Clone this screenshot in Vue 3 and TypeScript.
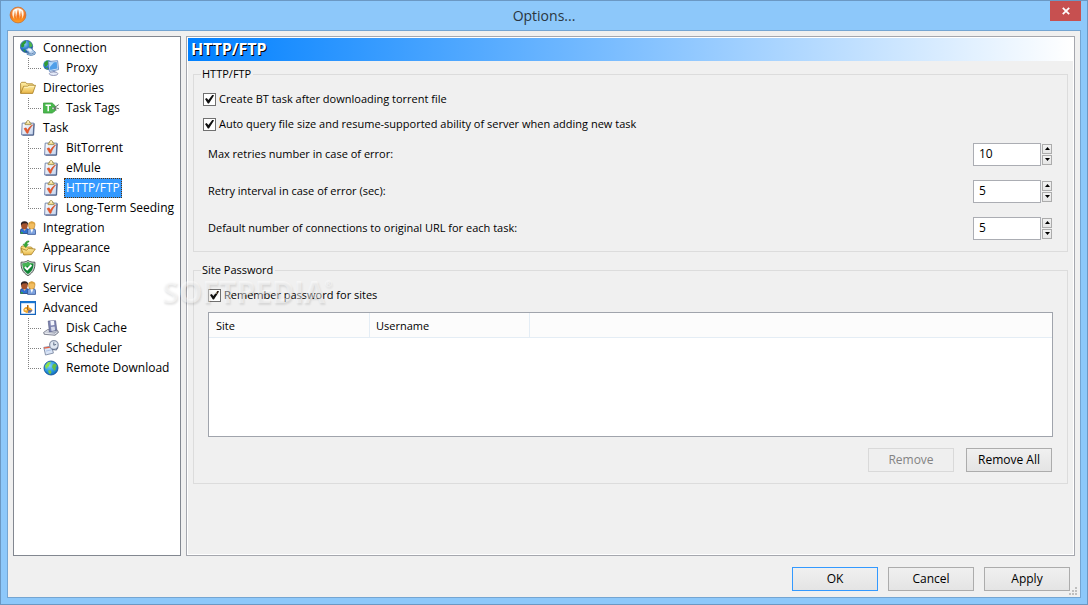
<script setup lang="ts">
import { ref, reactive } from 'vue'

interface TreeItem {
  label: string
  icon: string
  children?: TreeItem[]
}

interface NumberSetting {
  id: string
  label: string
  value: number
}

const tree: TreeItem[] = [
  { label: 'Connection', icon: 'connection', children: [{ label: 'Proxy', icon: 'proxy' }] },
  { label: 'Directories', icon: 'folder', children: [{ label: 'Task Tags', icon: 'tag' }] },
  {
    label: 'Task',
    icon: 'task',
    children: [
      { label: 'BitTorrent', icon: 'task' },
      { label: 'eMule', icon: 'task' },
      { label: 'HTTP/FTP', icon: 'task' },
      { label: 'Long-Term Seeding', icon: 'task' },
    ],
  },
  { label: 'Integration', icon: 'users' },
  { label: 'Appearance', icon: 'appearance' },
  { label: 'Virus Scan', icon: 'shield' },
  { label: 'Service', icon: 'users' },
  {
    label: 'Advanced',
    icon: 'advanced',
    children: [
      { label: 'Disk Cache', icon: 'disk' },
      { label: 'Scheduler', icon: 'scheduler' },
      { label: 'Remote Download', icon: 'globe' },
    ],
  },
]

const selected = ref('HTTP/FTP')
const createTask = ref(true)
const autoQuery = ref(true)
const rememberPassword = ref(true)

const settings = reactive<NumberSetting[]>([
  { id: 'max-retries', label: 'Max retries number in case of error:', value: 10 },
  { id: 'retry-interval', label: 'Retry interval in case of error (sec):', value: 5 },
  { id: 'connections', label: 'Default number of connections to original URL for each task:', value: 5 },
])

function step(setting: NumberSetting, delta: number): void {
  setting.value = Math.max(0, setting.value + delta)
}
</script>

<template>
  <div class="window">
    <svg class="sprite" aria-hidden="true">
      <defs>
        <radialGradient id="g-globe" cx="0.35" cy="0.3" r="0.8">
          <stop offset="0" stop-color="#8fd0f5" />
          <stop offset="0.5" stop-color="#2a78cc" />
          <stop offset="1" stop-color="#0d3f8f" />
        </radialGradient>
        <radialGradient id="g-sky" cx="0.4" cy="0.35" r="0.75">
          <stop offset="0" stop-color="#7fd2fb" />
          <stop offset="0.6" stop-color="#2392dd" />
          <stop offset="1" stop-color="#0f5fae" />
        </radialGradient>
        <linearGradient id="g-folder" x1="0" y1="0" x2="0" y2="1">
          <stop offset="0" stop-color="#fff0a8" />
          <stop offset="1" stop-color="#e8b444" />
        </linearGradient>
        <linearGradient id="g-paper" x1="0" y1="0" x2="1" y2="1">
          <stop offset="0" stop-color="#ffffff" />
          <stop offset="1" stop-color="#c3d2ec" />
        </linearGradient>
        <linearGradient id="g-metal" x1="0" y1="0" x2="1" y2="1">
          <stop offset="0" stop-color="#f4f6fb" />
          <stop offset="1" stop-color="#7f879c" />
        </linearGradient>
        <linearGradient id="g-logo" x1="0" y1="0" x2="0" y2="1">
          <stop offset="0" stop-color="#f7a05a" />
          <stop offset="0.55" stop-color="#f4701c" />
          <stop offset="1" stop-color="#ffa424" />
        </linearGradient>
        <linearGradient id="g-flame" x1="0" y1="0" x2="0" y2="1">
          <stop offset="0" stop-color="#fff" />
          <stop offset="0.6" stop-color="#fff0d8" />
          <stop offset="1" stop-color="#ffb84a" />
        </linearGradient>
        <symbol id="i-connection" viewBox="0 0 16 16">
          <circle cx="6.5" cy="6.5" r="6.2" fill="url(#g-globe)" stroke="#2b5a8c" stroke-width="0.6" />
          <path d="M1.5 3.5 4 1.2 6 .8 5.8 3 4.2 4.4 4.2 6.2 2.6 7.4 1 6.6z" fill="#2c9a35" />
          <path d="M8.5 1.4 11 2.4 12.4 5.4 11 7.6 9 6.6 9.4 4.4z" fill="#4fb848" />
          <path d="M3 9.4 5 9.4 5.6 11.8 4.2 11.6z" fill="#2f9a3c" />
          <path d="M5.6 9.6 8.6 7.4l3.2 1.2 1.6 2.2 2 1.4-.4 2-3.6 1.4-4.4-1.2.2-1.2 2-.8-2-1.2z" fill="#b5cfec" stroke="#4a7db2" stroke-width="0.8" />
          <path d="M7.6 9.2 10.4 8.6l1.8 2.2-2.2 1.2z" fill="#e9f4ff" />
          <path d="M8 13.4l3.4.6 3-1.4" fill="none" stroke="#496f9f" stroke-width="0.7" />
        </symbol>
        <symbol id="i-proxy" viewBox="0 0 16 16">
          <circle cx="5" cy="5" r="4.8" fill="url(#g-globe)" />
          <path d="M1 3 3.4.8 5.6.6 5.4 4 3.2 6.6 1.8 6.8z" fill="#2f9a35" />
          <path d="M2 8.4 4.6 7.4 5 9.6z" fill="#46a844" />
          <path d="M5.2 1.6 14.6.7l1 8.9-9.2 1.8z" fill="#dbeafb" stroke="#5580bd" stroke-width="0.8" />
          <path d="M6.3 2.7 13.7 1.9l.8 6.7-7.3 1.3z" fill="#4f9fe9" />
          <path d="M6.3 2.7 11 2.2 6.9 7z" fill="#b5dcfd" />
          <path d="M9.5 10.6 12 10.2l.6 2.4-2.8.4z" fill="#8fa5ce" />
          <ellipse cx="10.6" cy="13.7" rx="4.3" ry="1.8" fill="#e4eaf8" stroke="#7c83a8" stroke-width="0.8" />
        </symbol>
        <symbol id="i-folder" viewBox="0 0 16 16">
          <path d="M.6 13.3V3.4L1.6 2.3h4l1.2 1.5h5.8l.8 1v2" fill="url(#g-folder)" stroke="#a67c22" stroke-width="0.8" />
          <path d="M.7 13.4 3.6 6.3h4.1l1.2-1H15.5L12.7 13.4z" fill="url(#g-folder)" stroke="#a67c22" stroke-width="0.8" />
          <path d="M4.2 7.2h4l1-.9h4.9" fill="none" stroke="#fff8cf" stroke-width="0.8" />
        </symbol>
        <symbol id="i-tag" viewBox="0 0 16 16">
          <path d="M.4 3h8.8L12.4 6v4.6L9.2 13H.4z" fill="#49b94c" stroke="#3a9b3f" stroke-width="0.8" />
          <path d="M2.5 5.3h5.4M5.2 5.3v6" stroke="#fff" stroke-width="1.5" fill="none" />
          <circle cx="10.3" cy="8.3" r="1.3" fill="#fff" stroke="#30863a" stroke-width="0.6" />
          <path d="M10 8.2 13 6.5 15.7 4.6M11 8.4 13.6 8l2.2.7M11 9l2.6 1.1" fill="none" stroke="#687269" stroke-width="1" />
        </symbol>
        <symbol id="i-task" viewBox="0 0 16 16">
          <path d="M2.2 3.1h11.6l-.6 11.8H1.6z" fill="url(#g-paper)" stroke="#6a7ea8" stroke-width="0.9" />
          <path d="M2.6 15.2h11L14.3 3.5" fill="none" stroke="#354a75" stroke-width="0.8" />
          <path d="M5 4.6V3.2l1.5-.5C6.4 1.2 7.1.5 8.1.5s1.7.7 1.6 2.2l1.4.5v1.4z" fill="#f1dc90" stroke="#8d7b38" stroke-width="0.7" />
          <circle cx="8.1" cy="2" r="0.7" fill="#fff" />
          <path d="M4 8.6 6.1 7.8 7.5 10.2C8.6 8 10.2 6 12.8 4.8 10.7 7.2 9 10 8 13.3H6.8z" fill="#ea5a2d" stroke="#c13d1d" stroke-width="0.4" />
        </symbol>
        <symbol id="i-users" viewBox="0 0 16 16">
          <path d="M.5 13.5V10.6c0-1.4 1-2.2 2.5-2.2h3.2c1.4 0 2.2.8 2.2 2.2v2.9z" fill="#2f6fd0" stroke="#16295f" stroke-width="0.7" />
          <path d="M.9 12h1.8v1.7H.9z" fill="#27a04a" />
          <path d="M7.6 14.4V10.8c0-1.3 1-2.2 2.4-2.2h3.2c1.3 0 2.3.9 2.3 2.2v3.6z" fill="#7ea3df" stroke="#29498c" stroke-width="0.7" />
          <ellipse cx="4.4" cy="5.6" rx="3.3" ry="3.7" fill="#a4522c" />
          <path d="M1 5.4C.4 2.6 2 1.2 4.5 1.2s4 1.4 3.5 4.2L6.8 3.3 2.6 3.4z" fill="#2c2022" />
          <path d="M3.2 8.9 4.6 11 6 8.9z" fill="#d9a183" />
          <ellipse cx="11.7" cy="5.6" rx="3.2" ry="3.8" fill="#f2bd60" stroke="#a96f1c" stroke-width="0.5" />
          <path d="M8.4 5.2C8 2.8 9.4 1.5 11.8 1.5s4 1.3 3.5 3.7L13.8 3.4l-4 .1z" fill="#dba23e" />
          <path d="M10.4 9.2 11.8 13 13.2 9.2z" fill="#fff" />
        </symbol>
        <symbol id="i-appearance" viewBox="0 0 16 16">
          <path d="M1 13.4V6.9l1-.9h3l1.1 1h5.2l1 1v2" fill="#f9dc79" stroke="#a98129" stroke-width="0.8" />
          <path d="M1.1 8.4 3.8 15 11.4 14.6 15.3 9 8.4 8.5 6.4 10.3z" fill="url(#g-folder)" stroke="#a67c22" stroke-width="0.8" />
          <path d="M9 .9C6.6.7 5 2 4.7 4.2H3L5.6 7.6 8.3 4.4H6.9c0-1.4.6-2.2 2.1-2.5z" fill="#39ab36" stroke="#24802a" stroke-width="0.5" />
        </symbol>
        <symbol id="i-shield" viewBox="0 0 16 16">
          <path d="M8 .4C9.6 1.8 12 2.3 14.9 2.2c.3 5.6-1.2 10.3-6.9 13.5C2.3 12.5.8 7.8 1.1 2.2 4 2.3 6.4 1.8 8 .4z" fill="#cfd6d3" stroke="#3f4c47" stroke-width="0.9" />
          <path d="M8 1.9C9.5 3 11.3 3.5 13.5 3.6c0 4.3-1.4 7.9-5.5 10.4-4.100-2.500-5.500-6.100-5.500-10.400C4.700 3.500 6.500 3 8 1.900z" fill="#0f8434" />
          <path d="M8 1.9C9.5 3 11.3 3.5 13.5 3.6L3.5 8 2.5 3.6C4.7 3.5 6.5 3 8 1.9z" fill="#46b453" />
          <path d="M4.9 7 7.2 9.4 11.4 5" fill="none" stroke="#fff" stroke-width="2" />
        </symbol>
        <symbol id="i-advanced" viewBox="0 0 16 16">
          <path d="M.6 1.6h14.8v12.8H.6z" fill="#fff" stroke="#1464bd" stroke-width="1.2" />
          <path d="M.5 1.2h15v2H.5z" fill="#1976d2" />
          <path d="M3.3 9.4C4.5 7.3 6 6.8 7.2 7V5.2h1.6v2.2c2 .3 3.4 1.2 3.6 2.6l-1.2 2-4.4 1-3.2-1.600z" fill="#f0a62c" />
          <path d="M7.6 5v4.8l3 1" fill="none" stroke="#9a5f22" stroke-width="1" />
          <path d="M8.2 10.8 12.6 10 10.8 12.6 8 13z" fill="#5a6fb0" />
          <path d="M4.8 9h2v1.4h-2z" fill="#fff0bd" />
        </symbol>
        <symbol id="i-disk" viewBox="0 0 16 16">
          <path d="M.6 12.4 4.6 9.6 14.6 10.4l.9 2-3.5 2.9L1.2 14.3z" fill="url(#g-metal)" stroke="#5d6272" stroke-width="0.7" />
          <path d="M5.2 1 12.6.7l1.2 9.2-7.4 2z" fill="#7d84b0" stroke="#50567f" stroke-width="0.6" />
          <path d="M7.4 1.1h3.6l.4 4-3.6.4z" fill="#f2f4fc" />
          <path d="M7.9 7 11.6 6.5l.5 3.7-3.6.8z" fill="#d6daea" />
          <path d="M2 13.2l9.6 1 2.8-2" fill="none" stroke="#f7f8fc" stroke-width="0.8" />
        </symbol>
        <symbol id="i-scheduler" viewBox="0 0 16 16">
          <path d="M.8 7.4 8.6 6.2l1.8 6.9-7.9 1.9z" fill="#d9e4f6" stroke="#7d89a3" stroke-width="0.9" />
          <path d="M.8 7.4 8.6 6.2l.4 1.400L1.200 8.800z" fill="#e76142" />
          <path d="M3 11 8.4 9.9" stroke="#a2b9df" stroke-width="0.8" />
          <circle cx="10.9" cy="5" r="4.3" fill="#dfe7f1" stroke="#8a96ab" stroke-width="1.3" />
          <path d="M10.8 2.3V5.2l2.3-.8" fill="none" stroke="#51617b" stroke-width="0.9" />
          <path d="M8.8 9.4 13.2 10 15 7.4" fill="none" stroke="#65738e" stroke-width="1.1" />
        </symbol>
        <symbol id="i-globe" viewBox="0 0 16 16">
          <circle cx="8" cy="8" r="7" fill="url(#g-sky)" stroke="#13549a" stroke-width="0.9" />
          <path d="M2 6.1 4.6 2.6 7.6 1.7 7.8 3.2 6.4 4.3 6 6.3 4.3 7 4.3 8.6 2.8 8.6z" fill="#8be04a" />
          <path d="M9.8 4.5 12.3 3.4 14 5.9 12.7 6.8 12.6 9.4 11.1 10.9 10.2 8.5 9 7.2z" fill="#63bd43" />
          <path d="M5 10.6 7.4 10.2 8.6 12 7.2 14.2 5.9 13.3z" fill="#75c646" />
        </symbol>
      </defs>
    </svg>

    <header class="titlebar">
      <svg class="logo" viewBox="0 0 18 18" aria-hidden="true">
        <circle cx="9" cy="9" r="7.9" fill="url(#g-logo)" stroke="#c9702f" stroke-width="0.8" />
        <path d="M3.9 4.8C2.8 7.600 3.200 11.200 5.400 13.600 4.900 10.600 5 8.200 5.900 5.900 6.500 8.200 6.700 10.500 7.300 13 7.400 9.300 7.900 6.300 9 3.800c1.100 2.500 1.600 5.500 1.700 9.200.6-2.500.8-4.800 1.400-7.100.9 2.300 1 4.700.5 7.700 2.200-2.400 2.600-6 1.500-8.800C12.700 3.200 11 2.300 9 2.300S5.300 3.200 3.900 4.800z" fill="url(#g-flame)" />
        <path d="M5.900 5.200 6.500 9M12.100 5.200 11.500 9M9 3.400v6" fill="none" stroke="#f7924a" stroke-width="0.7" />
      </svg>
      <h1 class="title">Options...</h1>
      <button class="close" type="button" aria-label="Close">
        <svg viewBox="0 0 8 8" aria-hidden="true"><path d="M.8.8l6.400 6.400M7.200.8.8 7.200" stroke="#fff" stroke-width="1.800" /></svg>
      </button>
    </header>

    <div class="client">
      <div class="main">
        <nav class="tree" aria-label="Option pages">
          <ul>
            <li v-for="item in tree" :key="item.label">
              <a href="#" class="row" @click.prevent="selected = item.label">
                <svg class="icon" aria-hidden="true"><use :href="'#i-' + item.icon" /></svg>
                <span class="label" :class="{ selected: selected === item.label }">{{ item.label }}</span>
              </a>
              <ul v-if="item.children" class="children">
                <li v-for="child in item.children" :key="child.label" class="child">
                  <span class="branch"></span>
                  <a href="#" class="row" @click.prevent="selected = child.label">
                    <svg class="icon" aria-hidden="true"><use :href="'#i-' + child.icon" /></svg>
                    <span class="label" :class="{ selected: selected === child.label }">{{ child.label }}</span>
                  </a>
                </li>
              </ul>
            </li>
          </ul>
        </nav>

        <section class="page">
          <h2 class="banner">HTTP/FTP</h2>
          <div class="groups">
            <fieldset>
              <legend>HTTP/FTP</legend>
              <label class="check"><input v-model="createTask" type="checkbox" />Create BT task after downloading torrent file</label>
              <label class="check"><input v-model="autoQuery" type="checkbox" />Auto query file size and resume-supported ability of server when adding new task</label>
              <div class="numbers">
                <div v-for="s in settings" :key="s.id" class="number">
                  <label :for="s.id">{{ s.label }}</label>
                  <div class="spin">
                    <input :id="s.id" v-model.number="s.value" type="number" min="0" />
                    <div class="arrows">
                      <button type="button" aria-label="Increase" @click="step(s, 1)">
                        <svg viewBox="0 0 5 3" aria-hidden="true"><path d="M0 3h5L2.500 0z" /></svg>
                      </button>
                      <button type="button" aria-label="Decrease" @click="step(s, -1)">
                        <svg viewBox="0 0 5 3" aria-hidden="true"><path d="M0 0h5L2.500 3z" /></svg>
                      </button>
                    </div>
                  </div>
                </div>
              </div>
            </fieldset>

            <fieldset class="passwords">
              <legend>Site Password</legend>
              <label class="check"><input v-model="rememberPassword" type="checkbox" />Remember password for sites</label>
              <div class="list">
                <table>
                  <thead>
                    <tr>
                      <th scope="col" class="col">Site</th>
                      <th scope="col" class="col">Username</th>
                      <td></td>
                    </tr>
                  </thead>
                </table>
              </div>
              <div class="actions">
                <button class="btn" type="button" disabled>Remove</button>
                <button class="btn" type="button">Remove All</button>
              </div>
            </fieldset>
          </div>
        </section>
      </div>

      <footer class="footer">
        <button class="btn primary" type="button">OK</button>
        <button class="btn" type="button">Cancel</button>
        <button class="btn" type="button">Apply</button>
      </footer>
      <svg class="grip" viewBox="0 0 8 8" aria-hidden="true">
        <path d="M6 0h2v2H6zM3 3h2v2H3zM6 3h2v2H6zM0 6h2v2H0zM3 6h2v2H3zM6 6h2v2H6z" />
      </svg>
      <div class="watermark" aria-hidden="true">SOFTPEDIA<sup>®</sup></div>
    </div>
  </div>
</template>

<style>
body {
  margin: 0;
}
</style>

<style scoped>
* {
  box-sizing: border-box;
}

.window {
  display: flex;
  flex-direction: column;
  min-height: 100vh;
  padding: 0 6px 6px;
  border: 1px solid #6b98c3;
  background: #8dc8fa;
  color: #000;
  font: 12px/16px "Open Sans", "Noto Sans", sans-serif;
}

.sprite {
  position: absolute;
  width: 0;
  height: 0;
}

.titlebar {
  display: grid;
  grid-template-columns: 31px 1fr 31px;
  height: 29px;
}

.logo {
  width: 18px;
  height: 18px;
  margin: 5px 0 0 2px;
}

.title {
  margin: 0;
  color: #2a3640;
  font-size: 14px;
  font-weight: 400;
  line-height: 29px;
  text-align: center;
}

.close {
  display: flex;
  align-items: center;
  justify-content: center;
  height: 20px;
  padding: 0;
  border: 0;
  background: #c75050;
}

.close svg {
  width: 8px;
  height: 8px;
}

.client {
  position: relative;
  display: flex;
  flex: 1;
  flex-direction: column;
  padding: 5px 5px 6px;
  border: 1px solid #74a5d2;
  background: #f0f0f0;
}

.main {
  display: flex;
  flex: 1;
  gap: 5px;
}

.tree {
  flex: 0 0 168px;
  padding-top: 1px;
  border: 1px solid #828790;
  background: #fff;
}

.tree ul {
  margin: 0;
  padding: 0;
  list-style: none;
}

.row {
  display: flex;
  align-items: center;
  gap: 5px;
  height: 20px;
  padding-left: 6px;
  color: #000;
  text-decoration: none;
  white-space: nowrap;
}

.child {
  display: flex;
  padding-left: 14px;
}

.child .row {
  padding-left: 0;
}

.branch {
  width: 15px;
  height: 20px;
  background:
    repeating-linear-gradient(#808080 0 1px, transparent 1px 2px) 0 0 / 1px 20px no-repeat,
    repeating-linear-gradient(90deg, #808080 0 1px, transparent 1px 2px) 0 10px / 13px 1px no-repeat;
}

.child:last-child .branch {
  background-size: 1px 10px, 13px 1px;
}

.icon {
  flex: none;
  width: 16px;
  height: 16px;
}

.label {
  padding: 1px;
  border: 1px solid transparent;
}

.label.selected {
  border: 1px dotted #5a3208;
  background: #3399ff;
  color: #fff;
}

.page {
  display: flex;
  flex: 1;
  flex-direction: column;
  min-width: 0;
  padding: 1px;
  border: 1px solid #a5a7ae;
  background: #fff;
}

.banner {
  margin: 0;
  padding-left: 3px;
  background: linear-gradient(90deg, #0080ff, #fff);
  color: #fff;
  font-size: 16px;
  font-weight: 700;
  line-height: 23px;
  text-shadow: 1px 1px 0 #000;
}

.groups {
  display: flex;
  flex: 1;
  flex-direction: column;
  gap: 10px;
  padding: 5px;
  background: #f0f0f0;
  font-size: 11px;
}

fieldset {
  min-width: 0;
  margin: 0;
  padding: 7px 14px 11px 9px;
  border: 1px solid #dcdcdc;
}

legend {
  margin-left: -2px;
  padding: 0 2px 0 1px;
}

.check {
  display: flex;
  align-items: center;
  gap: 3px;
  width: fit-content;
  height: 20px;
}

.check + .check {
  margin-top: 5px;
}

.check input {
  display: grid;
  flex: none;
  width: 13px;
  height: 13px;
  margin: 0;
  place-content: center;
  border: 1px solid #707070;
  background: #fff;
  appearance: none;
}

.check input:checked::before {
  width: 9px;
  height: 9px;
  background: #111;
  clip-path: polygon(0 50%, 18% 38%, 38% 62%, 85% 0, 100% 12%, 44% 100%, 32% 100%);
  content: "";
}

.numbers {
  display: grid;
  gap: 13px;
  margin-top: 8px;
  padding: 0 1px 0 5px;
}

.number {
  display: flex;
  align-items: center;
  justify-content: space-between;
  height: 24px;
}

.spin {
  display: flex;
  align-items: center;
  gap: 1px;
}

.spin input {
  width: 68px;
  height: 23px;
  padding: 0 5px 2px;
  border: 1px solid #abadb3;
  background: #fff;
  color: #000;
  font: inherit;
  font-size: 12px;
  appearance: textfield;
}

.spin input::-webkit-inner-spin-button {
  appearance: none;
}

.arrows {
  display: grid;
  gap: 1px;
}

.arrows button {
  display: flex;
  align-items: center;
  justify-content: center;
  width: 10px;
  height: 10px;
  padding: 0;
  border: 1px solid #acacac;
  background: linear-gradient(#f2f2f2, #e6e6e6);
}

.arrows svg {
  width: 5px;
  height: 3px;
}

.passwords {
  padding-left: 14px;
}

.passwords legend {
  margin-left: -7px;
}

.list {
  height: 125px;
  margin-top: 7px;
  border: 1px solid #a0a4ac;
  background: #fff;
}

table {
  width: 100%;
  border-collapse: separate;
  border-spacing: 0;
  table-layout: fixed;
}

th,
td {
  height: 25px;
  padding: 2px 7px 0;
  border-bottom: 1px solid #e4edf5;
  background: #fcfcfc;
  font-weight: 400;
  text-align: left;
}

.col {
  width: 161px;
  border-right: 1px solid #e4edf5;
}

.col + .col {
  width: 160px;
  padding-left: 6px;
}

.actions {
  display: flex;
  gap: 12px;
  justify-content: flex-end;
  margin-top: 11px;
  padding-right: 1px;
}

.btn {
  width: 86px;
  height: 24px;
  padding: 0;
  border: 1px solid #acacac;
  background: linear-gradient(#f0f0f0, #e4e4e4);
  color: #000;
  font: inherit;
  font-size: 12px;
}

.btn:disabled {
  border-color: #d9d9d9;
  background: #efefef;
  color: #838383;
}

.btn.primary {
  border-color: #3399ff;
}

.footer {
  display: flex;
  gap: 10px;
  justify-content: flex-end;
  margin-top: 11px;
  padding-right: 5px;
}

.grip {
  position: absolute;
  right: 3px;
  bottom: 2px;
  width: 8px;
  height: 8px;
  fill: #bfbfbf;
}

.watermark {
  position: absolute;
  top: 245px;
  left: 154px;
  color: rgba(255, 255, 255, 0.45);
  font: 700 30px/32px "Open Sans", sans-serif;
  text-shadow: 1px 2px 2px rgba(0, 0, 0, 0.1);
  pointer-events: none;
}

.watermark sup {
  font-size: 9px;
  line-height: 0;
  vertical-align: 16px;
}
</style>
